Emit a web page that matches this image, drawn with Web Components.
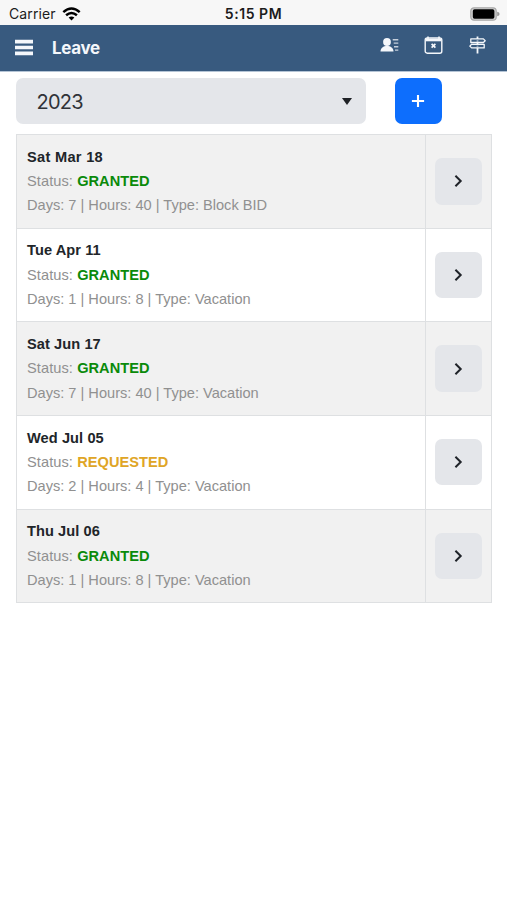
<!DOCTYPE html>
<html lang="en">
<head>
<meta charset="utf-8">
<title>Leave</title>
<style>
body { margin: 0; background: #fff; font-family: "Liberation Sans", Arial, sans-serif; color: #212529; }
</style>
</head>
<body>
<leave-app></leave-app>
<script>
function define(name, html) {
  const template = document.createElement('template');
  template.innerHTML = html;
  customElements.define(name, class extends HTMLElement {
    constructor() {
      super();
      this.attachShadow({ mode: 'open' }).append(template.content.cloneNode(true));
    }
  });
}

define('status-bar', `
<style>
:host { display: grid; grid-template-columns: 1fr auto 1fr; align-items: center; height: 25px; box-sizing: border-box; padding: 2px 7px 0 9px; background: #f7f7f7; font: 14px/20px Inter, sans-serif; color: #1c1c1c; }
.carrier { display: flex; align-items: center; gap: 6px; }
.carrier span { letter-spacing: .1px; }
.time { font-weight: 600; font-size: 14px; letter-spacing: .55px; margin-right: 2px; }
svg { display: block; }
.battery { justify-self: end; }
</style>
<div class="carrier"><span>Carrier</span>
<svg width="19" height="14" viewBox="0 0 19 14" fill="none" stroke="#000" stroke-width="2.5"><path d="M1.3 5.1Q9.5-2 17.7 5.1"/><path d="M4.1 8.3Q9.5 3.6 14.9 8.3"/><path d="M9.5 13.5 6.6 10.6Q9.5 8.3 12.4 10.6Z" fill="#000" stroke="none"/></svg></div>
<div class="time">5:15 PM</div>
<svg class="battery" width="30" height="14" viewBox="0 0 30 14"><rect x=".8" y=".8" width="25.4" height="12.4" rx="3.2" fill="#d4d4d4" stroke="#a8a8a8" stroke-width="1.2"/><rect x="2.8" y="2.3" width="21.6" height="9.4" rx="1.7" fill="#000"/><path d="M27.2 4.7Q29.6 5.3 29.6 7T27.2 9.3Z" fill="#999"/></svg>
`);

define('nav-bar', `
<style>
:host { display: flex; align-items: center; height: 47px; box-sizing: border-box; padding: 0 20px 2px 15px; background: #385a7f; border-bottom: 1px solid #b4c4d5; color: #fff; }
h1 { margin: 2px auto 0 19px; font: 700 17px/24px Inter, sans-serif; letter-spacing: -.35px; color: #f4f7fb; }
nav { display: flex; gap: 25px; align-items: center; padding-bottom: 4px; }
svg { display: block; }
.menu { margin-top: 1px; }
</style>
<svg class="menu" width="18" height="17" viewBox="0 0 18 17" fill="#f4f7fb"><path d="M0 .8h18v3.6H0zM0 6.7h18v3.6H0zM0 12.6h18v3.6H0z"/></svg>
<h1>Leave</h1>
<nav>
<svg width="19" height="18" viewBox="0 0 19 18" fill="#f4f7fb"><circle cx="7" cy="6" r="3.9"/><path d="M.5 15.5C.5 12 3.3 10 7 10s6.5 2 6.5 5.5z"/><path d="M12.7 3h5.6v1.4h-5.6zM13.7 6.4h4.6v1.4h-4.6zM14 10h4.3v1.4H14zM15 13.4h3.3v1.4H15z" opacity=".75"/></svg>
<svg width="19" height="18" viewBox="0 0 19 18" fill="none" stroke="#f4f7fb"><path d="M4 .5v2.4M15 .5v2.4" stroke-width="1.6"/><rect x="1.2" y="1.9" width="16.6" height="15.3" rx="2" stroke-width="1.4"/><path d="M1.6 3.8h15.8" stroke-width="3"/><path d="M7.6 7.9l3.8 3.8M11.4 7.9l-3.8 3.8" stroke-width="1.7"/></svg>
<svg width="19" height="18" viewBox="0 0 19 18" fill="none" stroke="#f4f7fb" stroke-width="1.3" stroke-linejoin="round"><path d="M9.5.5v17" stroke-width="1.8"/><path fill="#385a7f" d="M2.8 2.9h12.6l1.8 1.8-1.8 1.8H2.8zM16.2 8.3H3.6l-1.8 1.8 1.8 1.8h12.6z"/><path d="M9.5 4v2M9.5 9.4v2" stroke-width="1.8" opacity=".45"/></svg>
</nav>
`);

define('year-select', `
<style>
:host { display: flex; align-items: center; justify-content: space-between; width: 350px; height: 46px; box-sizing: border-box; padding: 1px 14px 0 21px; border-radius: 7px; background: #e4e6ea; font: 20px/26px Inter, sans-serif; letter-spacing: -.75px; color: #303338; }
i { width: 0; height: 0; border: 5px solid transparent; border-top: 7px solid #1f2226; border-bottom: 0; margin-bottom: 1px; }
</style>
<span><slot></slot></span><i></i>
`);

define('add-button', `
<style>
:host { display: grid; place-items: center; width: 47px; height: 46px; border-radius: 7px; background: #0d6efd; }
svg { display: block; margin-right: 1px; }
</style>
<svg width="14" height="14" viewBox="0 0 14 14" stroke="#fff" stroke-width="2.1"><path d="M7 .9v12.2M.9 7h12.2"/></svg>
`);

define('open-button', `
<style>
:host { display: grid; place-items: center; width: 46.5px; height: 46.5px; border-radius: 7px; background: #e4e6ea; }
svg { display: block; }
</style>
<svg width="10" height="14" viewBox="0 0 10 14" fill="none" stroke="#1f2329" stroke-width="2"><path d="M2.4 1.8 7.7 7 2.4 12.2"/></svg>
`);

define('leave-row', `
<style>
:host { display: grid; grid-template-columns: 409px 1fr; height: 93.65px; box-sizing: border-box; border-bottom: 1px solid #dee0e2; background: #fff; font-size: 14.6px; line-height: 24.4px; color: #909090; }
:host(:nth-child(odd)) { background: #f1f1f1; }
.info { padding: 9.6px 0 0 10.5px; border-right: 1px solid #dee0e2; white-space: nowrap; }
.date { font-weight: bold; color: #212529; letter-spacing: .08px; }
.status { letter-spacing: .08px; }
.action { display: grid; place-items: center; }
</style>
<div class="info"><div class="date"><slot name="date"></slot></div><div class="status">Status: <slot name="status"></slot></div><div><slot></slot></div></div>
<div class="action"><open-button></open-button></div>
`);

define('leave-status', `
<style>
:host { display: inline; font-weight: bold; letter-spacing: .05px; color: #0a8a0a; }
:host([requested]) { color: #dfa526; }
</style><slot></slot>
`);

define('leave-list', `
<style>:host { display: block; margin: 10px 15px 0 15.5px; border: 1px solid #dee0e2; border-bottom: 0; }</style><slot></slot>
`);

define('leave-app', `
<style>
:host { display: block; min-height: 900px; background: #fff; }
.tools { display: flex; gap: 29.5px; padding: 6px 15.5px 0; }
</style>
<status-bar></status-bar>
<nav-bar></nav-bar>
<div class="tools"><year-select>2023</year-select><add-button></add-button></div>
<leave-list>
<leave-row><span slot="date" style="letter-spacing:.3px">Sat Mar 18</span><leave-status slot="status">GRANTED</leave-status>Days: 7 | Hours: 40 | Type: Block BID</leave-row>
<leave-row><span slot="date">Tue Apr 11</span><leave-status slot="status">GRANTED</leave-status>Days: 1 | Hours: 8 | Type: Vacation</leave-row>
<leave-row><span slot="date">Sat Jun 17</span><leave-status slot="status">GRANTED</leave-status>Days: 7 | Hours: 40 | Type: Vacation</leave-row>
<leave-row><span slot="date">Wed Jul 05</span><leave-status slot="status" requested>REQUESTED</leave-status>Days: 2 | Hours: 4 | Type: Vacation</leave-row>
<leave-row><span slot="date">Thu Jul 06</span><leave-status slot="status">GRANTED</leave-status>Days: 1 | Hours: 8 | Type: Vacation</leave-row>
</leave-list>
`);
</script>
</body>
</html>
